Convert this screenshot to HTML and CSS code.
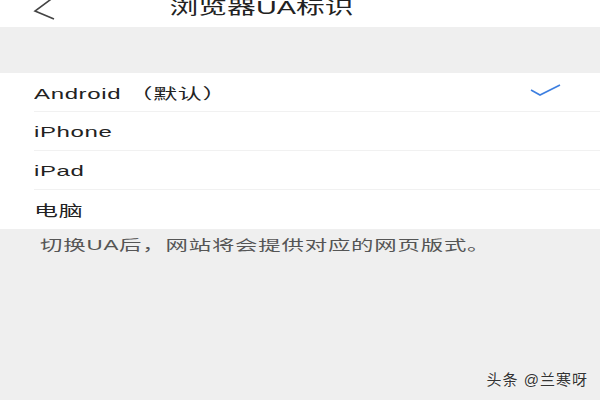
FILE: index.html
```html
<!DOCTYPE html>
<html lang="zh-CN">
<head>
<meta charset="utf-8">
<title>浏览器UA标识</title>
<link rel="stylesheet" href="styles.css">
</head>
<body>
  <header class="topbar">
    <svg class="back" width="26" height="24" viewBox="0 0 26 24">
      <polyline points="22,-3 3,11 22,19" fill="none" stroke="#444" stroke-width="1.6"/>
    </svg>
    <h1 class="title"><span class="wide">浏览器UA标识</span></h1>
  </header>

  <div class="spacer"></div>

  <ul class="ua-list">
    <li class="ua-item selected">
      <span class="wide">Android （默认）</span>
      <svg class="check" width="32" height="14" viewBox="0 0 32 14">
        <polyline points="1,6 10,11 30,1" fill="none" stroke="#3d7fe0" stroke-width="1.6"/>
      </svg>
    </li>
    <li class="ua-item"><span class="wide">iPhone</span></li>
    <li class="ua-item"><span class="wide">iPad</span></li>
    <li class="ua-item last"><span class="wide">电脑</span></li>
  </ul>

  <p class="note"><span class="wide">切换UA后，网站将会提供对应的网页版式。</span></p>

  <div class="watermark">头条 @兰寒呀</div>
</body>
</html>
```

FILE: styles.css
```css
html, body {
  margin: 0;
  padding: 0;
}

body {
  width: 600px;
  height: 400px;
  overflow: hidden;
  background: #efefef;
  font-family: "Liberation Sans", "Noto Sans CJK SC", sans-serif;
  color: #222;
  position: relative;
}

/* horizontally widened glyphs used throughout the page */
.wide {
  display: inline-block;
  transform: scaleX(1.6);
  transform-origin: left center;
  white-space: nowrap;
}

.topbar {
  height: 27px;
  background: #fff;
  display: flex;
  justify-content: center;
  align-items: flex-start;
  padding-right: 76px;
  position: relative;
}

.back {
  position: absolute;
  left: 32px;
  top: 0;
}

.title {
  margin: -4px 0 0 0;
  font-size: 18px;
  font-weight: normal;
  line-height: 24px;
  color: #222;
}

.title .wide {
  transform-origin: center center;
}

.spacer {
  height: 46px;
}

.ua-list {
  list-style: none;
  margin: 0;
  padding: 0;
  background: #fff;
}

.ua-item {
  height: 38px;
  margin-left: 34px;
  border-bottom: 1px solid #f1f1f1;
  display: flex;
  align-items: center;
  justify-content: space-between;
  font-size: 15px;
  color: #222;
  letter-spacing: 0.4px;
}

.ua-item.last {
  border-bottom-color: #fff;
}

.check {
  margin-right: 38px;
  margin-top: -2px;
}

.note {
  margin: 0;
  padding: 6px 0 0 40px;
  font-size: 14px;
  line-height: 20px;
  color: #555;
  letter-spacing: 0.5px;
}

.watermark {
  position: absolute;
  right: 12px;
  bottom: 11px;
  font-size: 15px;
  letter-spacing: 1px;
  color: #333;
  text-shadow: 0 0 2px #fff;
}
```
